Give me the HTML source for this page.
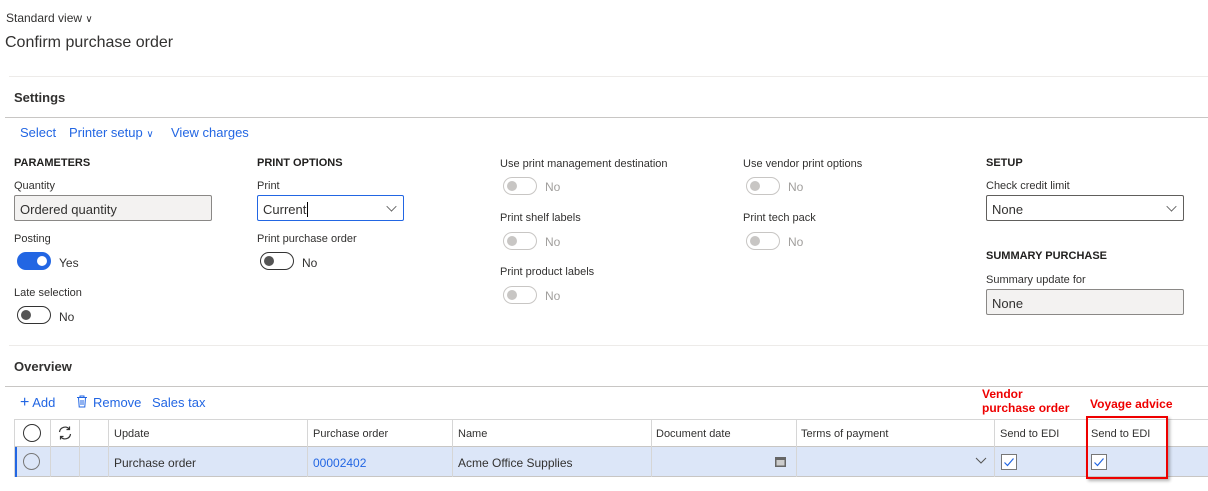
<!DOCTYPE html><html><head><style>
*{margin:0;padding:0;box-sizing:border-box}
body{width:1208px;height:491px;background:#fff;font-family:"Liberation Sans",sans-serif;color:#323130;position:relative;overflow:hidden}
.a{position:absolute;white-space:nowrap}
.lbl{font-size:11px;color:#323130}
.hd{font-size:11px;font-weight:bold;color:#201f1e}
.lnk{font-size:13px;color:#2266e3}
.tg{position:absolute;width:34px;height:18px;border:1px solid #333;border-radius:9px}
.tg::after{content:"";position:absolute;left:3px;top:3px;width:10px;height:10px;border-radius:50%;background:#555}
.tg.on{background:#2266e3;border-color:#2266e3}
.tg.on::after{left:auto;right:3px;background:#fff}
.tg.dis{border-color:#c8c6c4}
.tg.dis::after{background:#c8c6c4}
.tv{font-size:12px}
.dv{font-size:12px;color:#a19f9d}
.inp{position:absolute;height:26px;border:1px solid #8a8886;border-radius:2px;font-size:13px;padding:6px 5px}
.chev{position:absolute;right:7px;top:6px;width:9px;height:9px;border-right:1px solid #555;border-bottom:1px solid #555;transform:rotate(45deg) scale(.8)}
.vl{position:absolute;top:419px;height:58px;width:1px;background:#d6d6d6}
.gh{font-size:11px;top:428px}
.gc{font-size:12px;top:456px}
.red{color:#e00;font-weight:bold;font-size:12px;line-height:14px}
.cb{position:absolute;width:16px;height:16px;border:1px solid #777;background:#fff}
</style></head><body>
<div class="a" style="left:6px;top:11px;font-size:12px">Standard view <span style="font-size:10px">&#x2228;</span></div>
<div class="a" style="left:5px;top:34px;font-size:16px">Confirm purchase order</div>
<div class="a" style="left:9px;top:76px;width:1199px;height:1px;background:#edebe9"></div>
<div class="a" style="left:14px;top:90px;font-size:13px;font-weight:bold">Settings</div>
<div class="a" style="left:5px;top:117px;width:1203px;height:1px;background:#c8c6c4"></div>
<div class="a lnk" style="left:20px;top:125px">Select</div>
<div class="a lnk" style="left:69px;top:125px">Printer setup <span style="font-size:10px">&#x2228;</span></div>
<div class="a lnk" style="left:171px;top:125px">View charges</div>

<div class="a hd" style="left:14px;top:157px">PARAMETERS</div>
<div class="a lbl" style="left:14px;top:180px">Quantity</div>
<div class="inp" style="left:14px;top:195px;width:198px;background:#f3f2f1">Ordered quantity</div>
<div class="a lbl" style="left:14px;top:233px">Posting</div>
<div class="tg on" style="left:17px;top:252px"></div><div class="a tv" style="left:59px;top:256px">Yes</div>
<div class="a lbl" style="left:14px;top:287px">Late selection</div>
<div class="tg" style="left:17px;top:306px"></div><div class="a tv" style="left:59px;top:310px">No</div>

<div class="a hd" style="left:257px;top:157px">PRINT OPTIONS</div>
<div class="a lbl" style="left:257px;top:180px">Print</div>
<div class="inp" style="left:257px;top:195px;width:147px;border-color:#2266e3">Current<span style="border-left:1px solid #000;margin-left:1px"></span><div class="chev"></div></div>
<div class="a lbl" style="left:257px;top:233px">Print purchase order</div>
<div class="tg" style="left:260px;top:252px"></div><div class="a tv" style="left:302px;top:256px">No</div>

<div class="a lbl" style="left:500px;top:158px">Use print management destination</div>
<div class="tg dis" style="left:503px;top:177px"></div><div class="a dv" style="left:545px;top:180px">No</div>
<div class="a lbl" style="left:500px;top:212px">Print shelf labels</div>
<div class="tg dis" style="left:503px;top:232px"></div><div class="a dv" style="left:545px;top:235px">No</div>
<div class="a lbl" style="left:500px;top:266px">Print product labels</div>
<div class="tg dis" style="left:503px;top:286px"></div><div class="a dv" style="left:545px;top:289px">No</div>

<div class="a lbl" style="left:743px;top:158px">Use vendor print options</div>
<div class="tg dis" style="left:746px;top:177px"></div><div class="a dv" style="left:788px;top:180px">No</div>
<div class="a lbl" style="left:743px;top:212px">Print tech pack</div>
<div class="tg dis" style="left:746px;top:232px"></div><div class="a dv" style="left:788px;top:235px">No</div>

<div class="a hd" style="left:986px;top:157px">SETUP</div>
<div class="a lbl" style="left:986px;top:180px">Check credit limit</div>
<div class="inp" style="left:986px;top:195px;width:198px;border-color:#605e5c">None<div class="chev"></div></div>
<div class="a hd" style="left:986px;top:250px">SUMMARY PURCHASE</div>
<div class="a lbl" style="left:986px;top:274px">Summary update for</div>
<div class="inp" style="left:986px;top:289px;width:198px;background:#f3f2f1">None</div>

<div class="a" style="left:9px;top:345px;width:1199px;height:1px;background:#edebe9"></div>
<div class="a" style="left:14px;top:359px;font-size:13px;font-weight:bold">Overview</div>
<div class="a" style="left:5px;top:386px;width:1203px;height:1px;background:#c8c6c4"></div>
<div class="a lnk" style="left:20px;top:395px"><span style="font-size:16px;line-height:12px">+</span> Add</div>
<svg class="a" style="left:76px;top:395px" width="12" height="13" viewBox="0 0 12 13"><path d="M1 2.5h10M4 2.5V1h4v1.5M2.5 2.5l.7 9.5h5.6l.7-9.5M5 5v5M7 5v5" fill="none" stroke="#2266e3"/></svg>
<div class="a lnk" style="left:93px;top:395px">Remove</div>
<div class="a lnk" style="left:152px;top:395px">Sales tax</div>

<div class="a red" style="left:982px;top:387px">Vendor<br>purchase order</div>
<div class="a red" style="left:1090px;top:397px">Voyage advice</div>

<div class="a" style="left:14px;top:419px;width:1194px;height:1px;background:#d6d6d6"></div>
<div class="a" style="left:14px;top:446px;width:1194px;height:31px;background:#dce6f8;border-top:1px solid #c8c6c4;border-bottom:1px solid #c8c6c4"></div>
<div class="a" style="left:14px;top:447px;width:3px;height:30px;background:#2266e3"></div>
<div class="vl" style="left:14px"></div><div class="vl" style="left:50px"></div><div class="vl" style="left:79px"></div><div class="vl" style="left:108px"></div><div class="vl" style="left:307px"></div><div class="vl" style="left:452px"></div><div class="vl" style="left:651px"></div><div class="vl" style="left:796px"></div><div class="vl" style="left:994px"></div><div class="vl" style="left:1086px"></div>
<div class="a" style="left:23px;top:424px;width:18px;height:18px;border:1px solid #333;border-radius:50%"></div>
<svg class="a" style="left:57px;top:425px" width="16" height="16" viewBox="0 0 16 16"><path d="M2.5 7A5.5 5.5 0 0 1 12.5 4.5M13.5 9A5.5 5.5 0 0 1 3.5 11.5M12.5 1.5v3h-3M3.5 14.5v-3h3" fill="none" stroke="#333" stroke-width="1.2"/></svg>
<div class="a" style="left:23px;top:453px;width:17px;height:17px;border:1px solid #777;border-radius:50%"></div>
<div class="a gh" style="left:114px">Update</div>
<div class="a gh" style="left:313px">Purchase order</div>
<div class="a gh" style="left:458px">Name</div>
<div class="a gh" style="left:656px">Document date</div>
<div class="a gh" style="left:801px">Terms of payment</div>
<div class="a gh" style="left:1000px">Send to EDI</div>
<div class="a gh" style="left:1091px">Send to EDI</div>
<div class="a gc" style="left:114px">Purchase order</div>
<div class="a gc" style="left:313px;color:#2266e3">00002402</div>
<div class="a gc" style="left:458px">Acme Office Supplies</div>
<svg class="a" style="left:775px;top:457px" width="11" height="10" viewBox="0 0 11 10"><rect x="0" y="0" width="11" height="10" fill="#666"/><rect x="1.5" y="3" width="8" height="5.5" fill="#ccc"/></svg>
<svg class="a" style="left:975px;top:457px" width="12" height="8" viewBox="0 0 12 8"><path d="M1 1l5 5 5-5" fill="none" stroke="#555"/></svg>
<div class="cb" style="left:1001px;top:454px"><svg width="14" height="14" viewBox="0 0 14 14" style="position:absolute;left:0;top:0"><path d="M2.5 7.5l3 3 6-7" fill="none" stroke="#2266e3" stroke-width="1.2"/></svg></div>
<div class="cb" style="left:1091px;top:454px"><svg width="14" height="14" viewBox="0 0 14 14" style="position:absolute;left:0;top:0"><path d="M2.5 7.5l3 3 6-7" fill="none" stroke="#2266e3" stroke-width="1.2"/></svg></div>
<div class="a" style="left:1086px;top:416px;width:82px;height:63px;border:2px solid #e00;box-shadow:2px 2px 3px rgba(0,0,0,.3)"></div>
</body></html>
